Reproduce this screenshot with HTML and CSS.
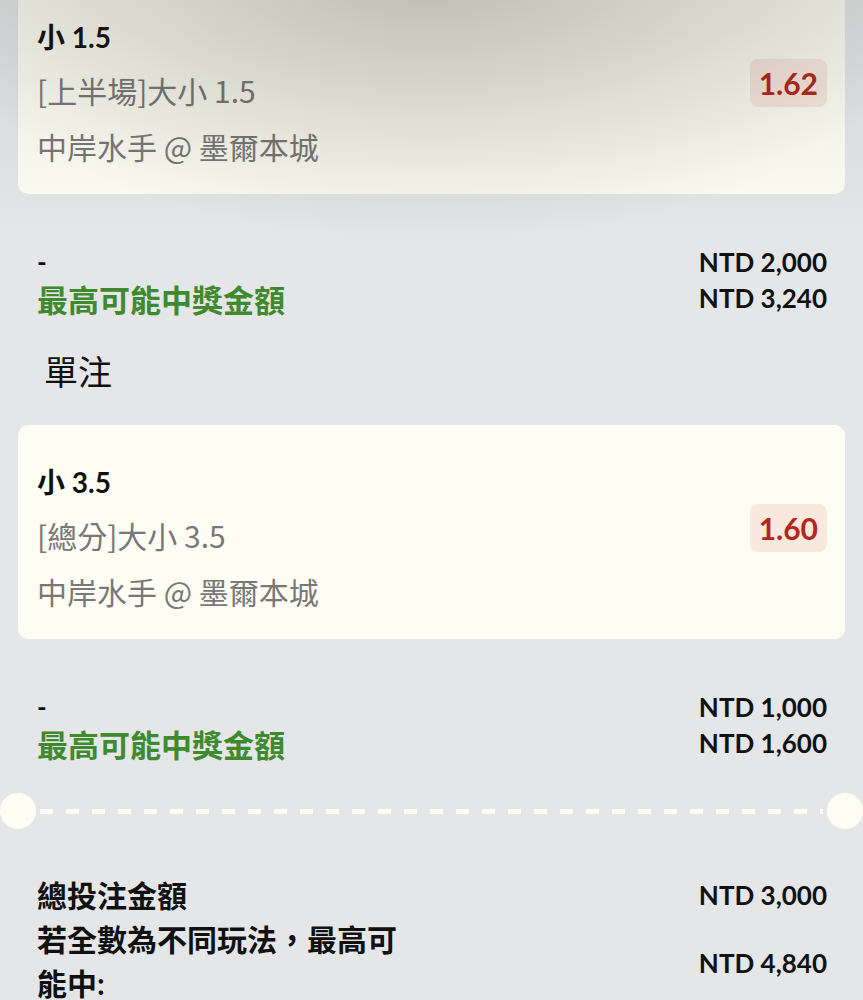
FILE: index.html
```html
<!DOCTYPE html>
<html lang="zh-Hant">
<head>
  <meta charset="UTF-8" />
  <meta name="viewport" content="width=device-width, initial-scale=1.0" />
  <title>投注單</title>
  <link rel="stylesheet" href="styles.css">
</head>
<body>
  <div class="slip">
    <div class="bet-card first">
      <div class="bet-info">
        <div class="bet-pick">小 1.5</div>
        <div class="bet-market">[上半場]大小 1.5</div>
        <div class="bet-match">中岸水手 @ 墨爾本城</div>
      </div>
      <span class="odds">1.62</span>
    </div>

    <div class="stake">
      <div class="stake-row">
        <span class="stake-dash">-</span>
        <span class="amount">NTD 2,000</span>
      </div>
      <div class="stake-row">
        <span class="win-label">最高可能中獎金額</span>
        <span class="amount">NTD 3,240</span>
      </div>
    </div>

    <h3 class="section-title">單注</h3>

    <div class="bet-card">
      <div class="bet-info">
        <div class="bet-pick">小 3.5</div>
        <div class="bet-market">[總分]大小 3.5</div>
        <div class="bet-match">中岸水手 @ 墨爾本城</div>
      </div>
      <span class="odds">1.60</span>
    </div>

    <div class="stake">
      <div class="stake-row">
        <span class="stake-dash">-</span>
        <span class="amount">NTD 1,000</span>
      </div>
      <div class="stake-row">
        <span class="win-label">最高可能中獎金額</span>
        <span class="amount">NTD 1,600</span>
      </div>
    </div>

    <div class="divider">
      <span class="notch"></span>
      <span class="dashes"></span>
      <span class="notch"></span>
    </div>

    <div class="totals">
      <div class="total-row">
        <span class="total-label">總投注金額</span>
        <span class="amount">NTD 3,000</span>
      </div>
      <div class="total-row">
        <span class="total-label">若全數為不同玩法，最高可能中:</span>
        <span class="amount">NTD 4,840</span>
      </div>
    </div>
  </div>
</body>
</html>
```

FILE: styles.css
```css
body {
  font-family: "Lato", "Noto Sans CJK TC", sans-serif;
  margin: 0;
  background: #e5e6e8;
  color: #111;
  overflow: hidden;
}
.slip {
  position: relative;
  padding-bottom: 40px;
}
/* shadow cast by the header above the sheet */
.slip::before {
  content: "";
  position: absolute;
  top: 0;
  left: 0;
  right: 0;
  height: 260px;
  background:
    radial-gradient(ellipse 60% 100% at 50% 0, rgba(40, 40, 30, 0.22), rgba(40, 40, 30, 0) 100%),
    linear-gradient(to bottom, rgba(40, 40, 30, 0.1), rgba(40, 40, 30, 0) 100%);
  pointer-events: none;
  z-index: 2;
}
.bet-card {
  margin: 0 18px;
  padding: 32px 18px 20px 19px;
  background: #fefdf4;
  border-radius: 10px;
  display: flex;
  align-items: center;
  justify-content: space-between;
}
.bet-card.first {
  margin-top: -20px;
}
.bet-pick {
  font-size: 28px;
  font-weight: 700;
  line-height: 50px;
}
.bet-market, .bet-match {
  font-family: "Noto Sans CJK TC", sans-serif;
  font-size: 30px;
  line-height: 56px;
  color: #787878;
}
.odds {
  margin-bottom: 20px;
  padding: 0 9px;
  line-height: 48px;
  border-radius: 8px;
  background: rgba(200, 50, 30, 0.1);
  color: #b3261e;
  font-size: 30px;
  font-weight: 700;
}
.stake {
  margin-top: 50px;
  padding: 0 36px 0 37px;
}
.stake-row, .total-row {
  display: flex;
  justify-content: space-between;
  align-items: center;
}
.stake-row {
  height: 36px;
}
.stake-dash {
  font-size: 26px;
  font-weight: 700;
}
.amount {
  font-size: 26px;
  font-weight: 700;
}
.win-label {
  font-size: 31px;
  font-weight: 700;
  color: #3f8a2e;
}
.section-title {
  margin: 36px 0 33px;
  padding-left: 44px;
  font-size: 34px;
  font-weight: 400;
  line-height: 40px;
}
.divider {
  display: flex;
  align-items: center;
  margin-top: 32px;
}
.notch {
  flex: none;
  width: 36px;
  height: 36px;
  border-radius: 50%;
  background: #fefdf4;
}
.dashes {
  flex: 1;
  height: 5px;
  margin: 0 4px;
  background: repeating-linear-gradient(to right, #fefdf4 0 13px, transparent 13px 26px);
}
.totals {
  margin-top: 44px;
  padding: 0 36px 0 37px;
}
.total-row {
  line-height: 44px;
}
.total-row + .total-row .amount {
  margin-top: 4px;
}
.total-label {
  max-width: 385px;
  font-size: 30px;
  font-weight: 700;
}
```
